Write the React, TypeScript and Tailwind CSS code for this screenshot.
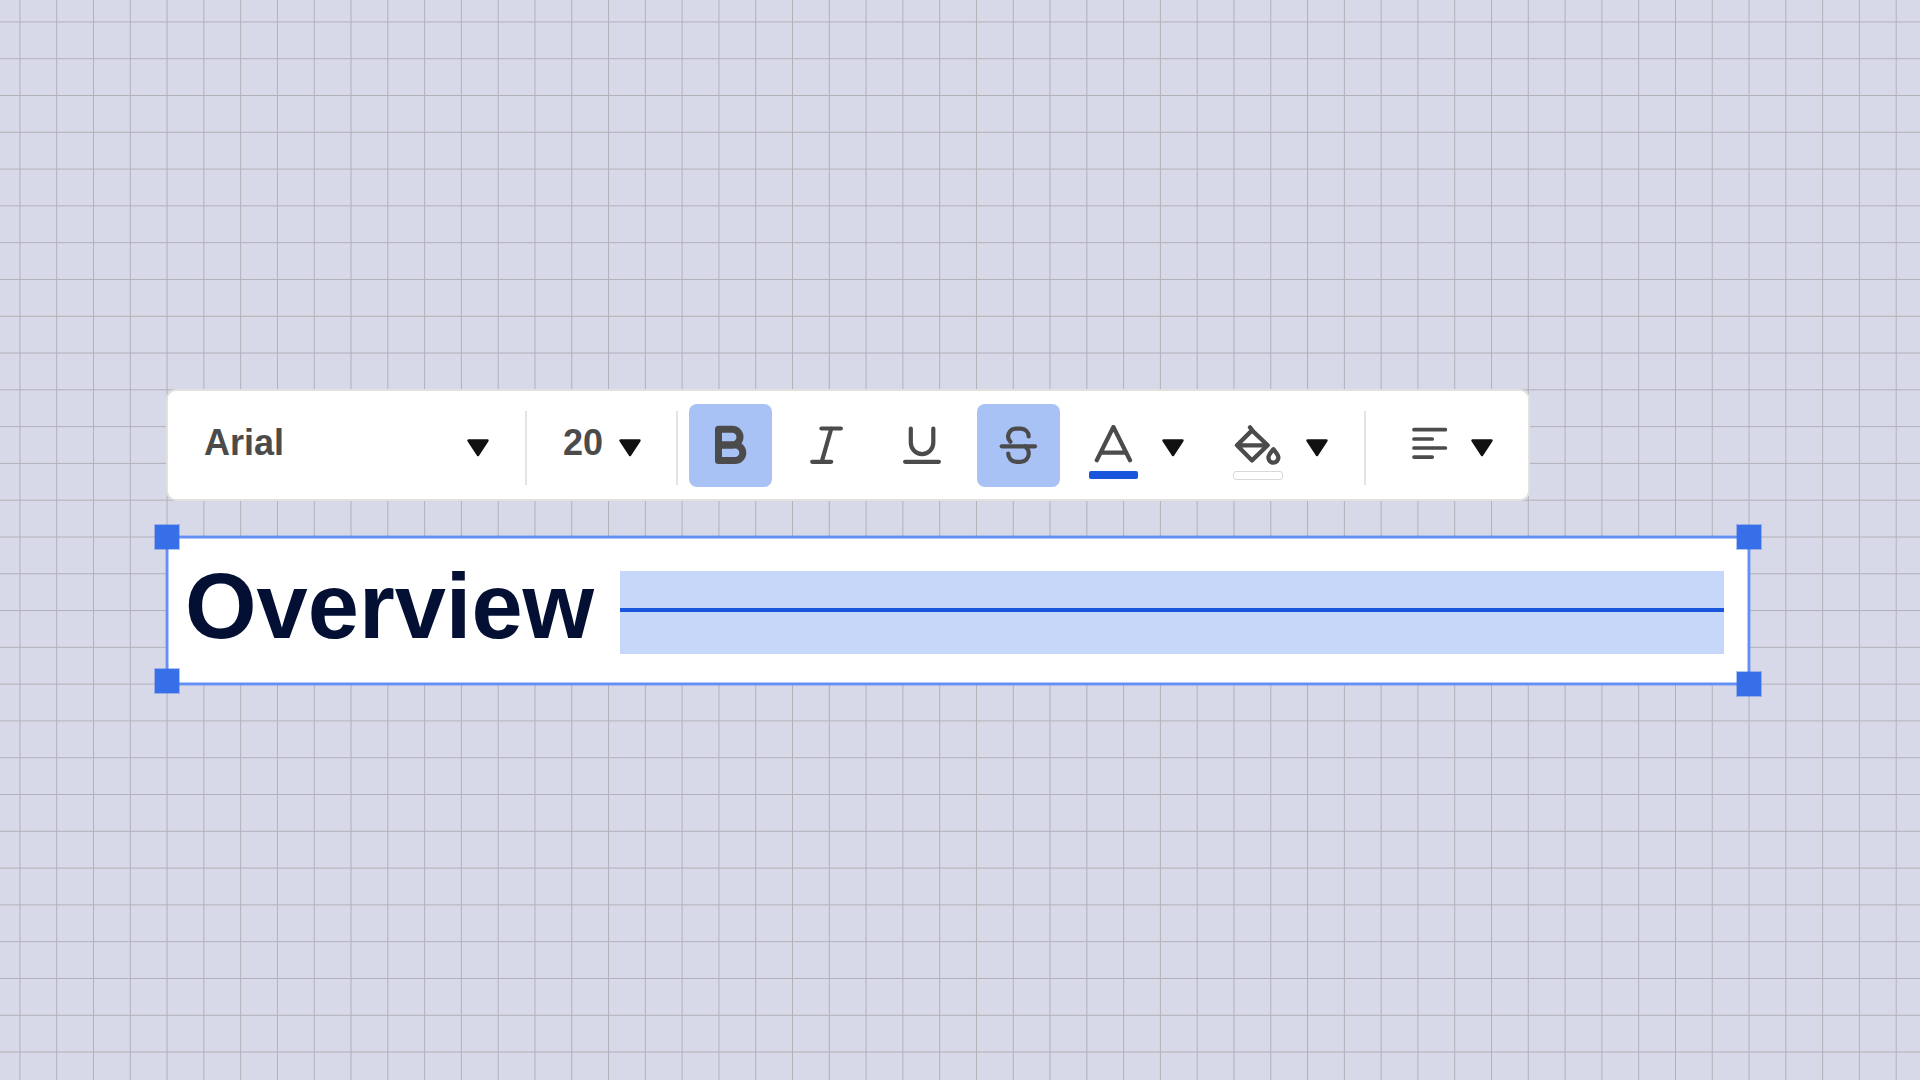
import type { ReactNode } from "react";

const GRID_STEP = 36.79;
const columns = Array.from({ length: 53 }, (_, i) => 19.92 + i * GRID_STEP);
const rows = Array.from({ length: 30 }, (_, i) => 21.92 + i * GRID_STEP);

function GridPaper() {
  return (
    <svg
      aria-hidden="true"
      className="absolute inset-0 h-full w-full"
      viewBox="0 0 1920 1080"
      preserveAspectRatio="xMinYMin slice"
      stroke="#b1b1b8"
      strokeWidth="1"
    >
      {columns.map((x) => (
        <line key={x} x1={x} x2={x} y1="0" y2="1080" />
      ))}
      {rows.map((y) => (
        <line key={y} x1="0" x2="1920" y1={y} y2={y} />
      ))}
    </svg>
  );
}

function Caret() {
  return (
    <svg aria-hidden="true" className="block h-[18px] w-[22px]" viewBox="0 0 22 18">
      <path d="M1.5 1.5h19L11 16z" fill="#111" stroke="#111" strokeWidth="2.4" strokeLinejoin="round" />
    </svg>
  );
}

function Divider() {
  return <div className="mt-1.5 h-[74px] w-0.5 shrink-0 bg-[#e4e3e0]" />;
}

function FormatButton({ label, active = false, children }: { label: string; active?: boolean; children: ReactNode }) {
  return (
    <button
      type="button"
      aria-label={label}
      aria-pressed={active}
      className={active ? "size-[83px] rounded-lg bg-[#a9c2f6]" : "size-[83px] rounded-lg"}
    >
      <svg
        aria-hidden="true"
        className="block size-full"
        viewBox="0 0 83 83"
        fill="none"
        stroke="#4c4b4c"
        strokeWidth="4.2"
        strokeLinecap="round"
        strokeLinejoin="round"
      >
        {children}
      </svg>
    </button>
  );
}

function CaretButton({ label, className }: { label: string; className: string }) {
  return (
    <button type="button" aria-label={label} className={className}>
      <Caret />
    </button>
  );
}

function Toolbar() {
  return (
    <div
      role="toolbar"
      aria-label="Text formatting"
      className="flex h-28 w-max items-center rounded-[10px] border-2 border-[#e2e1df] bg-white pr-[35px]"
    >
      <div className="relative w-[357px]">
        <select
          aria-label="Font"
          className="w-full appearance-none bg-transparent pb-1 pl-9 text-[36px] leading-[44px] font-bold text-[#4c4b4c]"
        >
          <option>Arial</option>
        </select>
        <div className="pointer-events-none absolute inset-y-0 right-9 flex items-center pt-1.5">
          <Caret />
        </div>
      </div>
      <Divider />
      <div className="relative w-[149px]">
        <select
          aria-label="Font size"
          className="w-full appearance-none bg-transparent pb-1 pl-9 text-[36px] leading-[44px] font-bold text-[#4c4b4c]"
        >
          <option>20</option>
        </select>
        <div className="pointer-events-none absolute inset-y-0 right-[35px] flex items-center pt-1.5">
          <Caret />
        </div>
      </div>
      <Divider />
      <div className="ml-[11px] flex gap-[13px]">
        <FormatButton label="Bold" active>
          <g strokeWidth="7">
            <path d="M29.5 25.3H43.2a7.8 7.8 0 0 1 0 15.6H29.5z" />
            <path d="M29.5 40.9H46a7.8 7.8 0 0 1 0 15.6H29.5z" />
          </g>
        </FormatButton>
        <FormatButton label="Italic">
          <path d="M36.4 24.5H55.9M27.2 57.8H46.2M46.3 24.5 36.7 57.8" />
        </FormatButton>
        <FormatButton label="Underline">
          <path d="M29.8 24.5V38.8a11.25 11.25 0 0 0 22.5 0V24.5M24.1 57.8H57.9" />
        </FormatButton>
        <FormatButton label="Strikethrough" active>
          <path d="M51.7 32.4a7.8 7.8 0 0 0-7.8-7.8h-4.9a7.8 7.8 0 0 0-5.6 13.2" />
          <path d="M31.2 49.6a8.2 8.2 0 0 0 8.2 8.2h4.2a8.2 8.2 0 0 0 8.2-8.2q0-4-3.6-7.3" />
          <path d="M24.7 42.3H58" />
        </FormatButton>
      </div>
      <button type="button" aria-label="Text color" className="ml-[29px] w-[49px] pt-[14px]">
        <svg
          aria-hidden="true"
          className="block h-[46px] w-[49px]"
          viewBox="0 0 49 46"
          fill="none"
          stroke="#4c4b4c"
          strokeWidth="4.2"
          strokeLinecap="round"
          strokeLinejoin="round"
        >
          <path d="M7.8 35.2 24.4 2 41 35.2M12.6 27.6H36.2" />
        </svg>
        <span className="block h-2 rounded-xs bg-[#1a56db]" />
      </button>
      <CaretButton label="Choose text color" className="ml-6 pt-1.5" />
      <button type="button" aria-label="Fill color" className="ml-[49px] w-[50px] pt-[14px]">
        <svg
          aria-hidden="true"
          className="block h-[46px] w-[50px]"
          viewBox="0 0 50 46"
          fill="none"
          stroke="#4c4b4c"
          strokeWidth="4.3"
          strokeLinecap="round"
          strokeLinejoin="round"
        >
          <path d="M4 20.3 19 5.4 34.7 20.3 19 35.4zM4 20.3H34.7M17 2.4 19.6 5.6" />
          <path d="M40.4 24.2C37.8 27.4 35.4 29.6 35.4 32.6a5 5 0 0 0 10 0C45.4 29.6 43 27.4 40.4 24.2z" />
        </svg>
        <span className="block h-[9px] rounded-[3px] border border-[#d9d8d6] bg-white" />
      </button>
      <CaretButton label="Choose fill color" className="ml-[23px] pt-1.5" />
      <div className="ml-9">
        <Divider />
      </div>
      <button type="button" aria-label="Align left" className="ml-[46px]">
        <svg
          aria-hidden="true"
          className="block h-9 w-9"
          viewBox="0 0 36 36"
          stroke="#4c4b4c"
          strokeWidth="3.7"
          strokeLinecap="round"
        >
          <path d="M2 2.7H33.4M2 12H20.2M2 21H33.4M2 30.1H20.2" />
        </svg>
      </button>
      <CaretButton label="Choose alignment" className="ml-[23px] pt-1.5" />
    </div>
  );
}

function Handle({ className }: { className: string }) {
  return <span className={`absolute size-6 bg-[#366fe8] ring-1 ring-[#366fe8]/40 ${className}`} />;
}

function SelectedText() {
  return (
    <div className="relative mt-[35px] flex h-[149px] items-start border-2 border-[#6490f5] bg-white pr-6 pl-[17px] ring-1 inset-ring-1 ring-[#6490f5]/40 inset-ring-[#6490f5]/50">
      <h1 className="pt-[15px] text-[92px] leading-[106px] font-bold text-[#041033]">Overview</h1>
      <div className="mt-[33px] ml-[26px] h-[83px] flex-1 bg-[#c7d7fa] pt-[37px]">
        <div className="h-1 bg-[#1a56db]" />
      </div>
      <Handle className="-top-[13px] -left-[13px]" />
      <Handle className="-top-[13px] -right-[13px]" />
      <Handle className="-bottom-[10px] -left-[13px]" />
      <Handle className="-right-[13px] -bottom-[13px]" />
    </div>
  );
}

export default function App() {
  return (
    <main className="relative min-h-screen overflow-hidden bg-[#d8d9e8] font-['Liberation_Sans',Arial,sans-serif]">
      <GridPaper />
      <div className="relative pt-[389px] pr-[170px] pl-[166px]">
        <Toolbar />
        <SelectedText />
      </div>
    </main>
  );
}
